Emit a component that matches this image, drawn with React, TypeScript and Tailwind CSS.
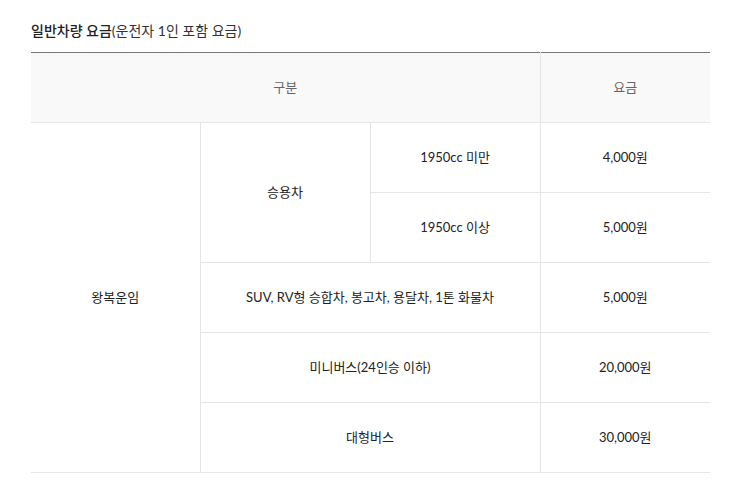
import React from "react";

function App() {
  const cell = "border-b border-l border-[#e5e5e5] text-center align-middle";

  return (
    <div className="w-[750px] h-[495px] bg-white pl-[31px] pt-[21px] font-['Lato','Noto_Sans_CJK_KR',sans-serif] text-[13px] text-[#222]">
      <h3 className="text-[14px] leading-[20px] h-[31px]">
        <span className="font-medium">일반차량 요금</span>
        <span className="font-normal text-[#333]">(운전자 1인 포함 요금)</span>
      </h3>
      <table className="w-[679px] border-collapse table-fixed border-t border-[#777]">
        <colgroup>
          <col className="w-[169px]" />
          <col className="w-[170px]" />
          <col className="w-[170px]" />
          <col className="w-[170px]" />
        </colgroup>
        <thead>
          <tr className="h-[70px] bg-[#f9f9f9] text-[#666]">
            <th colSpan={3} className="border-b border-[#e5e5e5] font-normal">
              구분
            </th>
            <th className={`${cell} font-normal`}>요금</th>
          </tr>
        </thead>
        <tbody>
          <tr className="h-[70px]">
            <td rowSpan={5} className="border-b border-[#e5e5e5] text-center">
              왕복운임
            </td>
            <td rowSpan={2} className={cell}>
              승용차
            </td>
            <td className={cell}>1950cc 미만</td>
            <td className={cell}>4,000원</td>
          </tr>
          <tr className="h-[70px]">
            <td className={cell}>1950cc 이상</td>
            <td className={cell}>5,000원</td>
          </tr>
          <tr className="h-[70px]">
            <td colSpan={2} className={cell}>
              SUV, RV형 승합차, 봉고차, 용달차, 1톤 화물차
            </td>
            <td className={cell}>5,000원</td>
          </tr>
          <tr className="h-[70px]">
            <td colSpan={2} className={cell}>
              미니버스(24인승 이하)
            </td>
            <td className={cell}>20,000원</td>
          </tr>
          <tr className="h-[70px]">
            <td colSpan={2} className={cell}>
              대형버스
            </td>
            <td className={cell}>30,000원</td>
          </tr>
        </tbody>
      </table>
    </div>
  );
}

export default App;
